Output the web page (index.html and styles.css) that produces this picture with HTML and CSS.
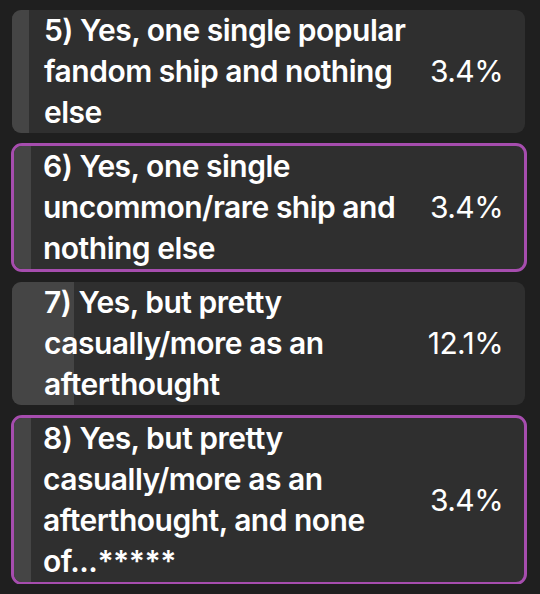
FILE: index.html
```html
<!DOCTYPE html>
<html lang="en">
<head>
<meta charset="utf-8">
<link rel="stylesheet" href="styles.css">
</head>
<body>
<div class="poll">
  <div class="option">
    <div class="fill" style="width:3.4%"></div>
    <div class="label">5) Yes, one single popular fandom ship and nothing else</div>
    <div class="pct">3.4%</div>
  </div>
  <div class="option selected">
    <div class="fill" style="width:3.4%"></div>
    <div class="label">6) Yes, one single uncommon/rare ship and nothing else</div>
    <div class="pct">3.4%</div>
  </div>
  <div class="option">
    <div class="fill" style="width:12.1%"></div>
    <div class="label">7) Yes, but pretty casually/more as an afterthought</div>
    <div class="pct">12.1%</div>
  </div>
  <div class="option selected">
    <div class="fill" style="width:3.4%"></div>
    <div class="label">8) Yes, but pretty casually/more as an afterthought, and none of...*****</div>
    <div class="pct">3.4%</div>
  </div>
</div>
</body>
</html>
```

FILE: styles.css
```css
html, body {
  margin: 0;
  padding: 0;
  background: #1f1f1f;
}

.poll {
  width: 513px;
  padding: 10px 15px 0 12px;
  display: flex;
  flex-direction: column;
  gap: 11px;
  font-family: Inter, "Noto Sans", sans-serif;
  color: #ffffff;
}

.option {
  position: relative;
  display: flex;
  align-items: center;
  background: #2f2f2f;
  border-radius: 9px;
  overflow: hidden;
  padding: 0 22px 0 32px;
}

.option.selected {
  border: 3px solid #a64dae;
  border-radius: 11px;
  margin: -1px -2px -1px -1px;
  padding: 0 21px 0 29px;
}

.fill {
  position: absolute;
  left: 0;
  top: 0;
  bottom: 0;
  background: #454545;
}

.label {
  position: relative;
  flex: 1;
  font-size: 30px;
  font-weight: 600;
  line-height: 41px;
  letter-spacing: -0.5px;
}

.pct {
  position: relative;
  min-width: 88px;
  text-align: right;
  font-size: 30px;
  font-weight: 400;
  line-height: 41px;
  letter-spacing: -0.6px;
}
```
